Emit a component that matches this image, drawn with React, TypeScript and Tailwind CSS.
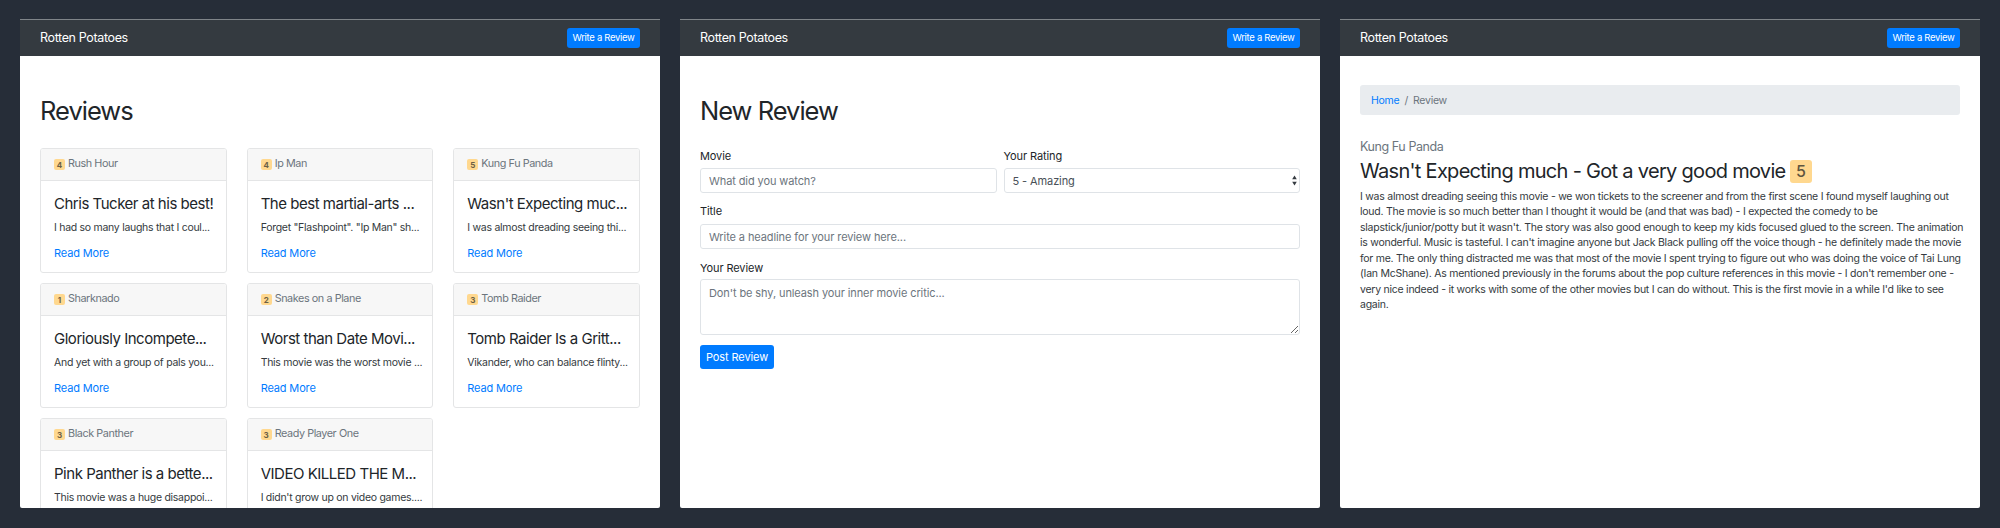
const reviews = [
  { r: 4, m: "Rush Hour", t: "Chris Tucker at his best!", d: "I had so many laughs that I coul..." },
  { r: 4, m: "Ip Man", t: "The best martial-arts ...", d: 'Forget "Flashpoint". "Ip Man" sh...' },
  { r: 5, m: "Kung Fu Panda", t: "Wasn't Expecting muc...", d: "I was almost dreading seeing thi..." },
  { r: 1, m: "Sharknado", t: "Gloriously Incompete...", d: "And yet with a group of pals you..." },
  { r: 2, m: "Snakes on a Plane", t: "Worst than Date Movi...", d: "This movie was the worst movie ..." },
  { r: 3, m: "Tomb Raider", t: "Tomb Raider Is a Gritt...", d: "Vikander, who can balance flinty..." },
  { r: 3, m: "Black Panther", t: "Pink Panther is a bette...", d: "This movie was a huge disappoi..." },
  { r: 3, m: "Ready Player One", t: "VIDEO KILLED THE M...", d: "I didn't grow up on video games...." },
];

const lines = [
  "I was almost dreading seeing this movie - we won tickets to the screener and from the first scene I found myself laughing out",
  "loud. The movie is so much better than I thought it would be (and that was bad) - I expected the comedy to be",
  "slapstick/junior/potty but it wasn't. The story was also good enough to keep my kids focused glued to the screen. The animation",
  "is wonderful. Music is tasteful. I can't imagine anyone but Jack Black pulling off the voice though - he definitely made the movie",
  "for me. The only thing distracted me was that most of the movie I spent trying to figure out who was doing the voice of Tai Lung",
  "(Ian McShane). As mentioned previously in the forums about the pop culture references in this movie - I don't remember one -",
  "very nice indeed - it works with some of the other movies but I can do without. This is the first movie in a while I'd like to see",
  "again.",
];

function Nav() {
  return (
    <div className="flex h-[37px] shrink-0 items-center justify-between border-t border-[#7f8489] bg-[#343a40] px-5">
      <span className="text-[12.5px] leading-none tracking-[-0.36px] text-white">Rotten Potatoes</span>
      <button className="h-5 w-[73px] rounded-[3px] bg-[#007bff] text-[9.5px] leading-none tracking-[-0.3px] text-white">Write a Review</button>
    </div>
  );
}

function Card({ r, m, t, d }: { r: number; m: string; t: string; d: string }) {
  return (
    <div className="h-[125px] overflow-hidden rounded-[3px] border border-[#e4e5e6] bg-white">
      <div className="flex h-[32px] items-center gap-[3px] border-b border-[#e4e5e6] bg-[#f7f7f7] px-[13px]">
        <span className="flex h-[11px] min-w-[11px] items-center justify-center rounded-[2px] bg-[#ffd88f] px-[2px] text-[8px] font-bold leading-none text-[#6b5f45]">{r}</span>
        <span className="text-[10.8px] leading-none tracking-[-0.42px] text-[#6c757d]">{m}</span>
      </div>
      <div className="px-[13px] pt-[13px]">
        <div className="whitespace-nowrap text-[15px] font-normal leading-[19px] tracking-[-0.48px] text-[#212529]">{t}</div>
        <p className="mt-[7px] whitespace-nowrap text-[10.5px] leading-[16px] tracking-[-0.28px] text-[#343a40]">{d}</p>
        <a className="mt-[9px] block text-[11px] leading-[16px] tracking-[-0.15px] text-[#007bff]">Read More</a>
      </div>
    </div>
  );
}

const inputCls = "h-[25px] w-full rounded-[3px] border border-[#dfe3e7] bg-white px-[8px] text-[11px] tracking-[-0.1px] text-[#495057] outline-none placeholder:text-[#6c757d]";
const labelCls = "block text-[11px] leading-[13px] tracking-[-0.1px] text-[#212529]";

export default function App() {
  return (
    <div className="flex h-[528px] gap-5 overflow-hidden bg-[#262d38] px-5 pt-[19px] font-['Inter','Liberation_Sans',sans-serif]">
      <div className="flex h-[489px] w-[640px] flex-col overflow-hidden rounded-b-[2px] bg-white">
        <Nav />
        <div className="px-5">
          <h1 className="mt-[38px] text-[25.5px] font-normal leading-[34px] tracking-[-1px] text-[#212529]">Reviews</h1>
          <div className="mt-[20px] grid grid-cols-3 gap-x-5 gap-y-[10px]">
            {reviews.map((x) => <Card key={x.m} {...x} />)}
          </div>
        </div>
      </div>

      <div className="flex h-[489px] w-[640px] flex-col overflow-hidden rounded-b-[2px] bg-white">
        <Nav />
        <div className="px-5">
          <h1 className="mt-[38px] text-[25.5px] font-normal leading-[34px] tracking-[-1px] text-[#212529]">New Review</h1>
          <div className="mt-[22px] grid grid-cols-2 gap-x-[7px]">
            <div>
              <label className={labelCls}>Movie</label>
              <input className={`${inputCls} mt-[5px] block`} placeholder="What did you watch?" />
            </div>
            <div>
              <label className={labelCls}>Your Rating</label>
              <div className="relative mt-[5px]">
                <select className={`${inputCls} block appearance-none px-[5px] pt-[1px]`} defaultValue="5">
                  <option value="5">5 - Amazing</option>
                </select>
                <svg className="absolute right-[3px] top-[7px] h-[11px] w-[5px]" viewBox="0 0 5 11" fill="#343a40">
                  <path d="M2.5 0.5 L4.8 4.2 L0.2 4.2 Z" />
                  <path d="M2.5 10.5 L4.8 6.8 L0.2 6.8 Z" />
                </svg>
              </div>
            </div>
          </div>
          <label className={`${labelCls} mt-[12px]`}>Title</label>
          <input className={`${inputCls} mt-[6px] block`} placeholder="Write a headline for your review here..." />
          <label className={`${labelCls} mt-[13px]`}>Your Review</label>
          <textarea className={`${inputCls} mt-[4px] block h-[56px] py-[5px]`} placeholder="Don't be shy, unleash your inner movie critic..." />
          <button className="mt-[10px] h-[24px] w-[74px] rounded-[3px] bg-[#007bff] text-[11px] tracking-[-0.1px] text-white">Post Review</button>
        </div>
      </div>

      <div className="flex h-[489px] w-[640px] flex-col overflow-hidden rounded-b-[2px] bg-white">
        <Nav />
        <div className="px-5">
          <div className="mt-[29px] flex h-[30px] items-center gap-[5px] rounded-[3px] bg-[#e9ecef] px-[11px] pt-[1px] text-[10.5px] tracking-[-0.25px]">
            <a className="text-[#007bff]">Home</a>
            <span className="text-[#6c757d]">/</span>
            <span className="text-[#6c757d]">Review</span>
          </div>
          <h3 className="mt-[24px] text-[12.5px] leading-[16px] tracking-[-0.42px] text-[#6c757d]">Kung Fu Panda</h3>
          <h2 className="mt-[5px] flex items-center gap-[4px] text-[20px] leading-[23px] tracking-[-0.7px] text-[#212529]">
            Wasn't Expecting much - Got a very good movie
            <span className="flex h-[23px] w-[22px] items-center justify-center rounded-[3px] bg-[#ffd88f] text-[16px] font-medium text-[#5f5640]">5</span>
          </h2>
          <div className="mt-[6px] text-[10.5px] leading-[15.45px] tracking-[-0.25px] text-[#343a40]">
            {lines.map((l) => <p key={l} className="whitespace-nowrap">{l}</p>)}
          </div>
        </div>
      </div>
    </div>
  );
}
